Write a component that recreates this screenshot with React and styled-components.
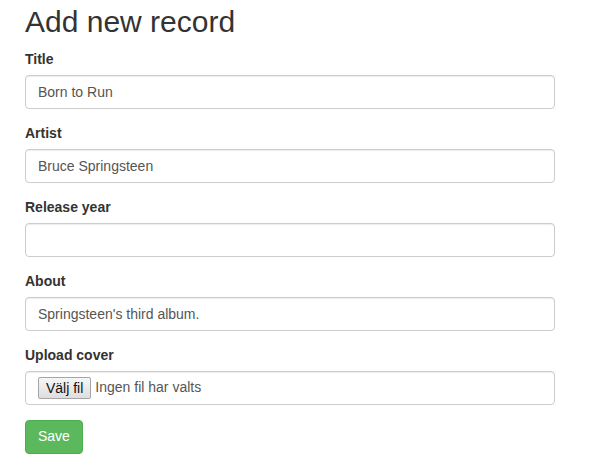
import styled, { createGlobalStyle } from "styled-components";

const GlobalStyle = createGlobalStyle`
  * { box-sizing: border-box; }
  body {
    margin: 0;
    background: #ffffff;
    font-family: "Liberation Sans", Arial, sans-serif;
    font-size: 14px;
    line-height: 1.42857;
    color: #333333;
  }
`;

const fields = [
  { label: "Title", value: "Born to Run" },
  { label: "Artist", value: "Bruce Springsteen" },
  { label: "Release year", value: "" },
  { label: "About", value: "Springsteen's third album." },
];

export default function App() {
  return (
    <>
      <GlobalStyle />
      <Page>
        <Heading>Add new record</Heading>
        <form onSubmit={(e) => e.preventDefault()}>
          {fields.map((f) => (
            <Group key={f.label}>
              <Label>{f.label}</Label>
              <Input type="text" defaultValue={f.value} />
            </Group>
          ))}
          <Group>
            <Label>Upload cover</Label>
            <FileBox>
              <FileButton type="button">Välj fil</FileButton>
              <FileText>Ingen fil har valts</FileText>
            </FileBox>
          </Group>
          <SaveButton type="submit">Save</SaveButton>
        </form>
      </Page>
    </>
  );
}

const Page = styled.div`
  width: 580px;
  padding: 5px 25px 0 25px;
`;

const Heading = styled.h2`
  font-family: "Liberation Sans", Arial, sans-serif;
  font-size: 30px;
  font-weight: 500;
  line-height: 1.1;
  color: #333333;
  margin: 0 0 12px;
`;

const Group = styled.div`
  margin-bottom: 15px;
`;

const Label = styled.label`
  display: block;
  font-weight: 700;
  margin-bottom: 5px;
`;

const Input = styled.input`
  display: block;
  width: 100%;
  height: 34px;
  padding: 6px 12px;
  font-family: "Liberation Sans", Arial, sans-serif;
  font-size: 14px;
  line-height: 1.42857;
  color: #555555;
  background: #ffffff;
  border: 1px solid #cccccc;
  border-radius: 4px;
  box-shadow: inset 0 1px 1px rgba(0, 0, 0, 0.075);
  outline: none;
`;

const FileBox = styled.div`
  display: flex;
  align-items: center;
  gap: 4px;
  width: 100%;
  height: 34px;
  padding: 0 12px;
  background: #ffffff;
  border: 1px solid #cccccc;
  border-radius: 4px;
  box-shadow: inset 0 1px 1px rgba(0, 0, 0, 0.075);
`;

const FileButton = styled.button`
  height: 22px;
  padding: 0 7px;
  font-family: "Liberation Sans", Arial, sans-serif;
  font-size: 14px;
  color: #111111;
  background: linear-gradient(#f6f6f6, #dedede);
  border: 1px solid #a6a6a6;
  border-radius: 2px;
`;

const FileText = styled.span`
  font-size: 14px;
  color: #555555;
`;

const SaveButton = styled.button`
  display: inline-block;
  padding: 6px 12px;
  font-family: "Liberation Sans", Arial, sans-serif;
  font-size: 14px;
  line-height: 1.42857;
  color: #ffffff;
  background: #5cb85c;
  border: 1px solid #4cae4c;
  border-radius: 4px;
  cursor: pointer;
`;
